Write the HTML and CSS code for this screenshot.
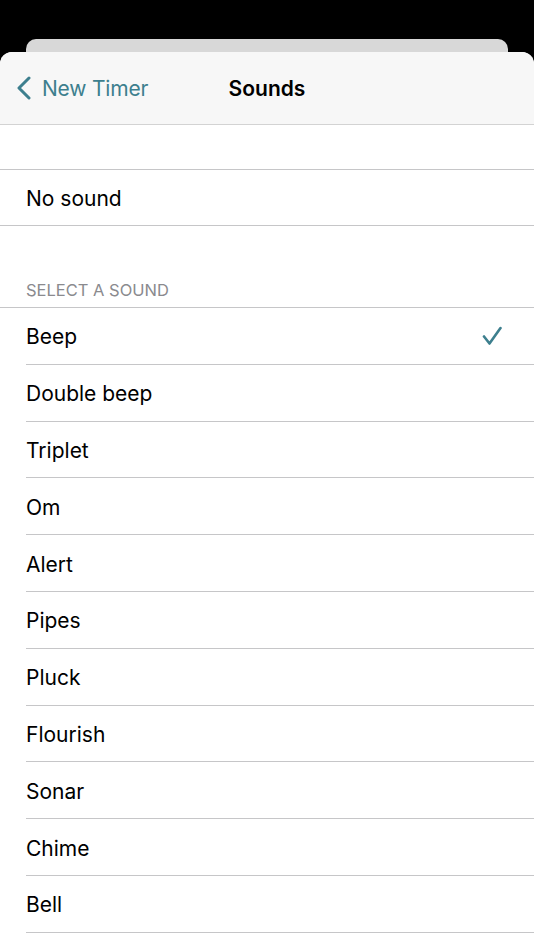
FILE: index.html
```
<!DOCTYPE html>
<html>
<head>
<meta charset="utf-8">
<link rel="stylesheet" href="styles.css">
</head>
<body>
<div class="screen">
  <div class="back-card"></div>
  <div class="sheet">
    <header class="nav">
      <div class="back">
        <svg class="chev" width="16" height="24" viewBox="0 0 16 24"><path d="M13 2 L3 12 L13 22" fill="none" stroke="#3d7f8e" stroke-width="3" stroke-linecap="round" stroke-linejoin="round"/></svg>
        <span>New Timer</span>
      </div>
      <div class="title">Sounds</div>
    </header>
    <div class="spacer"></div>
    <div class="group">
      <div class="row">No sound</div>
    </div>
    <div class="section-head">SELECT A SOUND</div>
    <div class="group list">
      <div class="row">Beep<svg class="check" width="20" height="20" viewBox="0 0 20 20"><path d="M2 10.5 L7.5 17.5 L18.5 2" fill="none" stroke="#3d7f8e" stroke-width="2.6" stroke-linecap="round" stroke-linejoin="round"/></svg></div>
      <div class="row">Double beep</div>
      <div class="row">Triplet</div>
      <div class="row">Om</div>
      <div class="row">Alert</div>
      <div class="row">Pipes</div>
      <div class="row">Pluck</div>
      <div class="row">Flourish</div>
      <div class="row">Sonar</div>
      <div class="row">Chime</div>
      <div class="row">Bell</div>
      <div class="row"></div>
    </div>
  </div>
</div>
</body>
</html>
```
FILE: styles.css
```
html, body { margin: 0; padding: 0; }
body {
  background: #000;
  font-family: Inter, "Noto Sans", sans-serif;
  width: 534px;
  height: 950px;
  overflow: hidden;
}
.screen { padding-top: 39px; }
.back-card {
  margin: 0 26px;
  height: 13px;
  background: #d8d8d8;
  border-radius: 10px 10px 0 0;
}
.sheet {
  background: #fff;
  border-radius: 12px 12px 0 0;
  overflow: hidden;
  height: 900px;
}
.nav {
  position: relative;
  height: 72px;
  background: #f7f7f7;
  border-bottom: 1px solid #d3d3d3;
  display: flex;
  align-items: center;
  justify-content: center;
}
.back {
  position: absolute;
  left: 16px;
  top: 0;
  bottom: 0;
  display: flex;
  align-items: center;
  gap: 10px;
  color: #3d7f8e;
  font-size: 21px;
  letter-spacing: -0.2px;
}
.title {
  font-size: 21px;
  font-weight: 600;
  color: #000;
}
.spacer { height: 44px; }
.group {
  border-top: 1px solid #c6c6c8;
  border-bottom: 1px solid #c6c6c8;
}
.row {
  height: 55px;
  box-sizing: border-box;
  padding: 2px 32px 0 26px;
  display: flex;
  align-items: center;
  justify-content: space-between;
  font-size: 21px;
  color: #000;
}
.list { border-bottom: none; }
.list .row {
  height: 56.8px;
  border-bottom: 1px solid #c6c6c8;
  margin-left: 26px;
  padding-left: 0;
}
.check { margin-top: -2px; }
.section-head {
  height: 81px;
  box-sizing: border-box;
  padding: 54px 26px 0;
  font-size: 16.5px;
  color: #8a8a8e;
}
```
